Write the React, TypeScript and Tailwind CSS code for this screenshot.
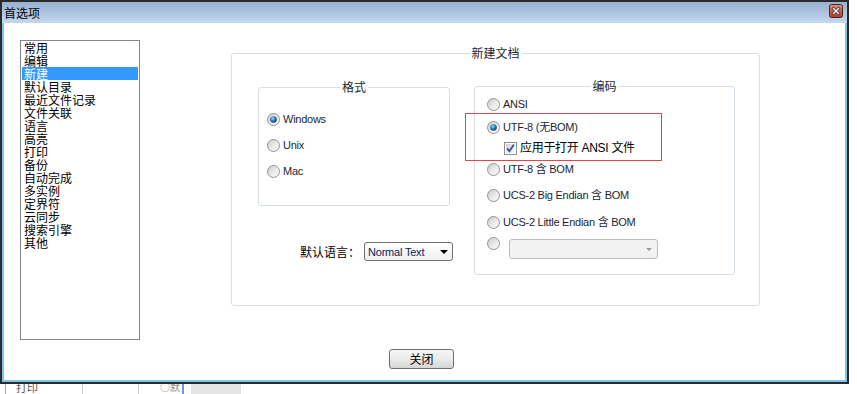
import React from "react";

const LIST_ITEMS = [
  "常用",
  "编辑",
  "新建",
  "默认目录",
  "最近文件记录",
  "文件关联",
  "语言",
  "高亮",
  "打印",
  "备份",
  "自动完成",
  "多实例",
  "定界符",
  "云同步",
  "搜索引擎",
  "其他",
];

const Radio = ({ checked = false }: { checked?: boolean }) => (
  <svg width="13" height="13" viewBox="0 0 13 13" className="shrink-0">
    <defs>
      <linearGradient id="rb-fill" x1="0" y1="0" x2="1" y2="1">
        <stop offset="0" stopColor="#c9c9c9" />
        <stop offset="0.6" stopColor="#eeeeee" />
        <stop offset="1" stopColor="#fbfbfb" />
      </linearGradient>
      <radialGradient id="rb-dot" cx="0.4" cy="0.35" r="0.7">
        <stop offset="0" stopColor="#9be4ff" />
        <stop offset="0.45" stopColor="#2a86c8" />
        <stop offset="1" stopColor="#0b355f" />
      </radialGradient>
    </defs>
    <circle cx="6.5" cy="6.5" r="6" fill="url(#rb-fill)" stroke="#939393" />
    {checked && <circle cx="6.5" cy="6.5" r="3.3" fill="url(#rb-dot)" />}
  </svg>
);

const Checkbox = () => (
  <svg width="13" height="13" viewBox="0 0 13 13" className="shrink-0">
    <defs>
      <linearGradient id="cb-fill" x1="0" y1="0" x2="1" y2="1">
        <stop offset="0" stopColor="#d4d4d4" />
        <stop offset="1" stopColor="#f8f8f8" />
      </linearGradient>
    </defs>
    <rect x="0.5" y="0.5" width="12" height="12" fill="#ffffff" stroke="#8e8f8f" />
    <rect x="2" y="2" width="9" height="9" fill="url(#cb-fill)" />
    <path d="M3.2 6.4 L5.4 9.2 L9.8 2.8" fill="none" stroke="#3b4e9c" strokeWidth="1.8" />
  </svg>
);

// one radio line, fixed 14px high so rows can be spaced by margins
const RadioRow = ({ label, checked, className = "" }: { label: string; checked?: boolean; className?: string }) => (
  <div className={`flex items-center gap-[3px] h-[14px] ${className}`}>
    <Radio checked={checked} />
    <span className="leading-[14px] tracking-[-0.25px] whitespace-nowrap">{label}</span>
  </div>
);

const GroupBox = ({
  title,
  className,
  children,
}: {
  title: string;
  className: string;
  children?: React.ReactNode;
}) => (
  <div className={`relative shrink-0 border border-[#d5dfe5] rounded-[3px] ${className}`}>
    <span className="absolute -top-[8px] left-1/2 -translate-x-1/2 bg-white px-[2px] text-[12px] leading-[14px] font-['Noto_Sans_CJK_SC',sans-serif] whitespace-nowrap">
      {title}
    </span>
    {children}
  </div>
);

const CloseButton = () => (
  <svg width="14" height="14" viewBox="0 0 14 14" className="mt-[2px] shrink-0">
    <defs>
      <linearGradient id="close-bg" x1="0" y1="0" x2="0" y2="1">
        <stop offset="0" stopColor="#e09585" />
        <stop offset="0.5" stopColor="#c8604d" />
        <stop offset="1" stopColor="#ad4230" />
      </linearGradient>
    </defs>
    <rect x="0.5" y="0.5" width="13" height="13" rx="2" fill="url(#close-bg)" stroke="#4b2420" />
    <path d="M4.5 4.5 L9.5 9.5 M9.5 4.5 L4.5 9.5" stroke="#5a2620" strokeWidth="3" strokeLinecap="square" />
    <path d="M4.5 4.5 L9.5 9.5 M9.5 4.5 L4.5 9.5" stroke="#ffffff" strokeWidth="1.4" strokeLinecap="square" />
  </svg>
);

const App = () => {
  return (
    <div className="w-[857px] h-[394px] bg-white overflow-hidden text-[11px] text-[#1a1f33] font-['Liberation_Sans','Noto_Sans_CJK_SC',sans-serif]">
      {/* dialog window */}
      <div className="w-[849px] h-[384px] border-2 border-[#2b2b2b] flex flex-col">
        {/* title bar */}
        <div className="h-[21px] shrink-0 flex items-start justify-between pl-[2px] pr-[4px] bg-linear-to-b from-[#97b1d1] to-[#c4d8ed]">
          <span className="mt-[3px] text-[12px] leading-[15px] text-black font-['Noto_Sans_CJK_SC',sans-serif]">首选项</span>
          <CloseButton />
        </div>

        {/* client area */}
        <div className="flex-1 bg-white border-x-2 border-b-2 border-[#7fc5ea]">
          <div className="flex items-start pl-[16px] pt-[17px]">
            {/* category list */}
            <ul className="w-[120px] h-[300px] shrink-0 border border-[#828790] px-[1px] text-[12px] leading-[13px] text-black font-['Noto_Sans_CJK_SC',sans-serif]">
              {LIST_ITEMS.map((item) => (
                <li
                  key={item}
                  className={`pl-[2px] h-[13px] whitespace-nowrap ${item === "新建" ? "bg-[#3399ff] text-white" : ""}`}
                >
                  {item}
                </li>
              ))}
            </ul>

            {/* 新建文档 */}
            <GroupBox title="新建文档" className="ml-[91px] mt-[13px] w-[529px] h-[253px]">
              <div className="flex items-start pt-[32px] pl-[26px]">
                <div className="w-[192px] shrink-0">
                  <GroupBox title="格式" className="mt-[1px] w-[192px] h-[119px]">
                    <div className="pt-[24px] pl-[8px]">
                      <RadioRow label="Windows" checked />
                      <RadioRow label="Unix" className="mt-[12px]" />
                      <RadioRow label="Mac" className="mt-[12px]" />
                    </div>
                  </GroupBox>

                  <div className="mt-[36px] -mr-[3px] h-[19px] flex items-center justify-end gap-[4px]">
                    <span className="text-[12px] leading-[14px] text-black font-['Noto_Sans_CJK_SC',sans-serif]">默认语言：</span>
                    <div className="w-[89px] h-[19px] shrink-0 flex items-center justify-between pl-[3px] pr-[4px] border border-[#6f6f6f] rounded-[3px] bg-linear-to-b from-white to-[#eeeeee]">
                      <span className="text-[#0c2260] leading-[14px] tracking-[-0.2px]">Normal Text</span>
                      <span className="w-0 h-0 border-l-[4px] border-r-[4px] border-t-[4px] border-l-transparent border-r-transparent border-t-black" />
                    </div>
                  </div>
                </div>

                <GroupBox title="编码" className="ml-[24px] w-[261px] h-[189px]">
                  <div className="pt-[10px] pl-[12px]">
                    <RadioRow label="ANSI" />
                    <RadioRow label="UTF-8 (无BOM)" checked className="mt-[9px]" />
                    <div className="mt-[7px] ml-[17px] h-[14px] flex items-center gap-[3px]">
                      <Checkbox />
                      <span className="text-[12px] leading-[14px] tracking-[-0.3px] text-black">应用于打开 ANSI 文件</span>
                    </div>
                    <RadioRow label="UTF-8 含 BOM" className="mt-[7px]" />
                    <RadioRow label="UCS-2 Big Endian 含 BOM" className="mt-[12px]" />
                    <RadioRow label="UCS-2 Little Endian 含 BOM" className="mt-[13px]" />
                    <div className="mt-[10px] flex items-start">
                      <div className="-mt-[2px]">
                        <Radio />
                      </div>
                      <div className="ml-[9px] w-[149px] h-[20px] flex items-center justify-end pr-[5px] border border-[#bcbcbc] rounded-[3px] bg-[#f2f2f2]">
                        <span className="w-0 h-0 border-l-[3px] border-r-[3px] border-t-[3px] border-l-transparent border-r-transparent border-t-[#9a9a9a]" />
                      </div>
                    </div>
                  </div>
                  {/* red highlight annotation */}
                  <div className="absolute -left-[10px] top-[26px] w-[197px] h-[48px] border border-[#e0474b] pointer-events-none" />
                </GroupBox>
              </div>
            </GroupBox>
          </div>

          <div className="pl-[385px] mt-[9px]">
            <button className="w-[65px] h-[20px] border border-[#707070] rounded-[3px] bg-linear-to-b from-[#f5f5f5] via-[#ebebeb] to-[#d6d6d6] text-[12px] leading-[14px] text-black font-['Noto_Sans_CJK_SC',sans-serif]">
              关闭
            </button>
          </div>
        </div>
      </div>

      {/* what shows of the window behind */}
      <div className="h-[10px] flex items-stretch overflow-hidden">
        <div className="ml-[5px] w-px bg-[#a6a6a6]" />
        <span className="ml-[10px] -mt-[3px] text-[11px] leading-[12px] text-[#555] font-['Noto_Sans_CJK_SC',sans-serif]">打印</span>
        <div className="ml-[44px] w-px bg-[#c8c8c8]" />
        <div className="ml-[55px] w-px bg-[#c8c8c8]" />
        <span className="ml-[21px] -mt-[3px] text-[10px] leading-[12px] text-[#888] font-['Noto_Sans_CJK_SC',sans-serif]">○默</span>
        <div className="ml-[2px] w-[2px] bg-[#6b9ad6]" />
        <div className="ml-[7px] w-[50px] bg-[#e4e4e4]" />
      </div>
    </div>
  );
};

export default App;
